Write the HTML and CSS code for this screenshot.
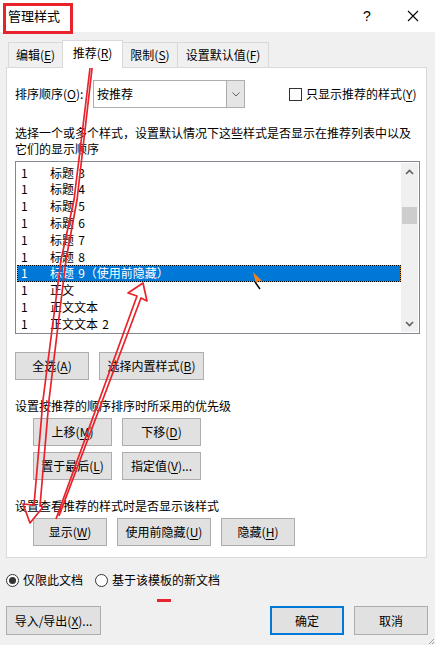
FILE: index.html
```html
<!DOCTYPE html>
<html lang="zh-CN">
<head>
<meta charset="utf-8">
<title>管理样式</title>
<link rel="stylesheet" href="styles.css">
</head>
<body>
<div class="titlebar">
  <span class="title">管理样式</span>
  <span class="help">?</span>
  <span class="close"><svg width="12" height="12" viewBox="0 0 12 12"><path d="M1 1L11 11M11 1L1 11" stroke="#000" stroke-width="1.1" fill="none"/></svg></span>
</div>

<div class="tabs">
  <div class="tab t1">编辑(<u>E</u>)</div>
  <div class="tab t2 active">推荐(<u>R</u>)</div>
  <div class="tab t3">限制(<u>S</u>)</div>
  <div class="tab t4">设置默认值(<u>F</u>)</div>
</div>

<div class="panel">
  <div class="sort-row">
    <span class="sort-label">排序顺序(<u>O</u>):</span>
    <div class="combo">
      <span class="combo-text">按推荐</span>
      <span class="combo-btn"><svg width="8" height="5" viewBox="0 0 8 5"><path d="M0.5 0.5L4 4L7.5 0.5" stroke="#606060" stroke-width="1" fill="none"/></svg></span>
    </div>
    <div class="check"><span class="box"></span><span>只显示推荐的样式(<u>Y</u>)</span></div>
  </div>

  <p class="desc">选择一个或多个样式，设置默认情况下这些样式是否显示在推荐列表中以及<br>它们的显示顺序</p>

  <div class="list">
    <div class="rows">
      <div class="row"><span class="pri">1</span><span>标题 3</span></div>
      <div class="row"><span class="pri">1</span><span>标题 4</span></div>
      <div class="row"><span class="pri">1</span><span>标题 5</span></div>
      <div class="row"><span class="pri">1</span><span>标题 6</span></div>
      <div class="row"><span class="pri">1</span><span>标题 7</span></div>
      <div class="row"><span class="pri">1</span><span>标题 8</span></div>
      <div class="row sel"><span class="pri">1</span><span>标题 9（使用前隐藏）</span></div>
      <div class="row"><span class="pri">1</span><span>正文</span></div>
      <div class="row"><span class="pri">1</span><span>正文文本</span></div>
      <div class="row"><span class="pri">1</span><span>正文文本 2</span></div>
    </div>
    <div class="scrollbar">
      <div class="sb-btn"><svg width="9" height="6" viewBox="0 0 9 6"><path d="M1 5L4.5 1.5L8 5" stroke="#606060" stroke-width="1.6" fill="none"/></svg></div>
      <div class="sb-track"><div class="thumb"></div></div>
      <div class="sb-btn"><svg width="9" height="6" viewBox="0 0 9 6"><path d="M1 1L4.5 4.5L8 1" stroke="#606060" stroke-width="1.6" fill="none"/></svg></div>
    </div>
  </div>

  <div class="btns r1">
    <button class="btn w74">全选(<u>A</u>)</button>
    <button class="btn w105">选择内置样式(<u>B</u>)</button>
  </div>

  <p class="sect">设置按推荐的顺序排序时所采用的优先级</p>
  <div class="btns r2 indent">
    <button class="btn w79">上移(<u>M</u>)</button>
    <button class="btn w79">下移(<u>D</u>)</button>
  </div>
  <div class="btns r3 indent">
    <button class="btn w79">置于最后(<u>L</u>)</button>
    <button class="btn w79">指定值(<u>V</u>)...</button>
  </div>

  <p class="sect">设置查看推荐的样式时是否显示该样式</p>
  <div class="btns r2 indent">
    <button class="btn w74">显示(<u>W</u>)</button>
    <button class="btn w94">使用前隐藏(<u>U</u>)</button>
    <button class="btn w74">隐藏(<u>H</u>)</button>
  </div>
</div>

<div class="radios">
  <span class="radio on"></span><span class="radio-label">仅限此文档</span>
  <span class="radio second"></span><span class="radio-label">基于该模板的新文档</span>
</div>

<div class="footer">
  <button class="btn w95 tall">导入/导出(<u>X</u>)...</button>
  <span class="spacer"></span>
  <button class="btn w74 tall ok">确定</button>
  <button class="btn w74 tall cancel">取消</button>
</div>

<svg class="annot" width="435" height="645" viewBox="0 0 435 645">
  <rect x="4.5" y="4.5" width="67" height="28" fill="none" stroke="#e8232b" stroke-width="3"/>
  <polyline points="91,60 74,200 61,260 43,400 34,505 23,504 30,523 43,507 40,506 49,400 66,260 77,200 93,60" fill="none" stroke="#e8232b" stroke-width="1.7" stroke-linejoin="round"/>
  <polyline points="56,519 137,296 128,293 143,283 147,301 141,298 59,516" fill="none" stroke="#e8232b" stroke-width="1.7" stroke-linejoin="round"/>
  <rect x="157" y="599" width="14" height="3" fill="#e8232b"/>
  <polygon points="253,272 262,281 258,281 256,284" fill="#f08020"/>
  <path d="M255 282L260 289" stroke="#000" stroke-width="1.4"/>
  <path d="M429 644L434 639M432 644L434 642" stroke="#a0a0a0" stroke-width="1"/>
</svg>
</body>
</html>
```

FILE: styles.css
```css
* {
  box-sizing: border-box;
}

html,
body {
  margin: 0;
  padding: 0;
}

body {
  width: 435px;
  height: 645px;
  overflow: hidden;
  position: relative;
  background: #f0f0f0;
  color: #000;
  font-family: "Noto Sans CJK SC", "Microsoft YaHei", sans-serif;
  font-size: 12px;
}

u {
  text-decoration: underline;
  text-decoration-thickness: 1px;
  text-underline-offset: 2px;
}

/* title bar */
.titlebar {
  height: 32px;
  background: #fff;
  display: flex;
  align-items: center;
}

.title {
  flex: 1;
  padding-left: 8px;
  font-size: 13px;
  line-height: 16px;
}

.help {
  width: 46px;
  text-align: center;
  font-family: "Liberation Sans", Arial, sans-serif;
  font-size: 14px;
  line-height: 16px;
}

.close {
  width: 45px;
  display: flex;
  justify-content: center;
  align-items: center;
}

/* tabs */
.tabs {
  display: flex;
  align-items: flex-end;
  height: 28px;
  margin: 8px 0 -1px 8px;
  position: relative;
  z-index: 1;
}

.tab {
  height: 25px;
  margin-bottom: 1px;
  border: 1px solid #d9d9d9;
  border-bottom: none;
  background: #f0f0f0;
  display: flex;
  align-items: center;
  justify-content: center;
  line-height: 16px;
}

.tab + .tab {
  margin-left: -1px;
}

.tab.active {
  height: 28px;
  margin-bottom: 0;
  padding-bottom: 3px;
  background: #fff;
  position: relative;
  z-index: 1;
}

.t1 { width: 55px; }
.t2 { width: 61px; }
.t3 { width: 56px; }
.t4 { width: 92px; }

/* panel */
.panel {
  margin-left: 6px;
  width: 421px;
  height: 491px;
  border: 1px solid #d9d9d9;
  background: #fff;
  padding-left: 8px;
}

.sort-row {
  margin-top: 12px;
  height: 28px;
  display: flex;
  align-items: center;
}

.sort-label {
  width: 78px;
  line-height: 16px;
}

.combo {
  width: 152px;
  height: 28px;
  border: 1px solid #adadad;
  display: flex;
}

.combo-text {
  flex: 1;
  padding-left: 3px;
  line-height: 26px;
}

.combo-btn {
  width: 18px;
  background: #e5e5e5;
  border-left: 1px solid #adadad;
  display: flex;
  align-items: center;
  justify-content: center;
}

.check {
  margin-left: 44px;
  display: flex;
  align-items: center;
  line-height: 16px;
}

.box {
  width: 13px;
  height: 13px;
  border: 1px solid #333;
  background: #fff;
  margin-right: 4px;
}

.desc {
  margin: 17px 0 0;
  line-height: 16px;
}

/* list */
.list {
  margin-top: 4px;
  width: 405px;
  height: 173px;
  border: 1px solid #828790;
  padding: 1px;
  display: flex;
}

.rows {
  flex: 1;
  padding-top: 1.6px;
}

.row {
  height: 16.8px;
  border: 1px solid transparent;
  display: flex;
  line-height: 14.8px;
  padding-left: 3px;
  white-space: nowrap;
  word-spacing: 1.5px;
}

.pri {
  width: 29px;
}

.row.sel {
  color: #fff;
  border: 1px dotted #000;
  background: linear-gradient(#0078d7, #0078d7) padding-box,
              linear-gradient(#f08a24, #f08a24) border-box;
}

.scrollbar {
  width: 17px;
  background: #f0f0f0;
  display: flex;
  flex-direction: column;
}

.sb-btn {
  height: 17px;
  display: flex;
  align-items: center;
  justify-content: center;
}

.sb-track {
  flex: 1;
}

.thumb {
  margin: 27px 1px 0;
  height: 17px;
  background: #cdcdcd;
}

/* buttons */
.btns {
  display: flex;
  gap: 10px;
  height: 28px;
}

.r1 { margin-top: 18px; }
.r2 { margin-top: 4px; }
.r3 { margin-top: 6px; }

.indent {
  padding-left: 18px;
}

.sect {
  margin: 18px 0 0;
  line-height: 16px;
}

.btn {
  height: 28px;
  margin: 0;
  padding: 0;
  border: 1px solid #adadad;
  background: #e1e1e1;
  color: #000;
  font: inherit;
  line-height: 16px;
  display: flex;
  align-items: center;
  justify-content: center;
  white-space: nowrap;
}

.w74 { width: 74px; }
.w79 { width: 79px; }
.w94 { width: 94px; }
.w95 { width: 95px; }
.w105 { width: 105px; }

/* radios */
.radios {
  margin-top: 14px;
  height: 16px;
  padding-left: 6px;
  display: flex;
  align-items: center;
  line-height: 16px;
}

.radio {
  width: 13px;
  height: 13px;
  border: 1px solid #333;
  border-radius: 50%;
  background: #fff;
  margin-right: 4px;
  display: flex;
  align-items: center;
  justify-content: center;
}

.radio.on::after {
  content: "";
  width: 7px;
  height: 7px;
  border-radius: 50%;
  background: #333;
}

.radio.second {
  margin-left: 12px;
}

/* footer */
.footer {
  margin-top: 18px;
  padding: 0 7px 0 6px;
  display: flex;
}

.btn.tall {
  height: 29px;
}

.spacer {
  flex: 1;
}

.btn.ok {
  border: 2px solid #0078d7;
}

.btn.cancel {
  margin-left: 10px;
}

/* screenshot annotations drawn on top */
.annot {
  position: absolute;
  left: 0;
  top: 0;
  pointer-events: none;
}
```
